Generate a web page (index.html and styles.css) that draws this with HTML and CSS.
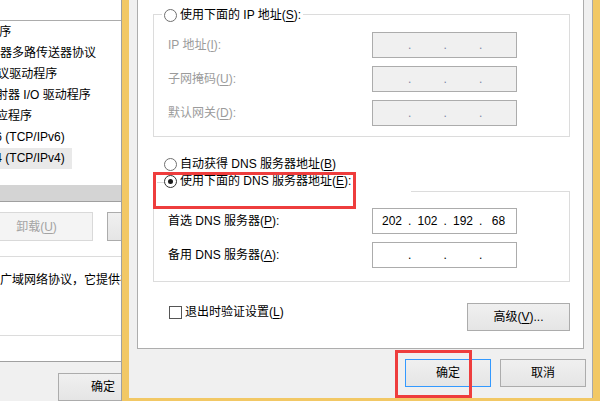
FILE: index.html
```html
<!DOCTYPE html>
<html lang="zh-CN">
<head>
<meta charset="utf-8">
<title>Internet 协议版本 4 (TCP/IPv4) 属性</title>
<link rel="stylesheet" href="styles.css">
</head>
<body>
<div class="screen">
  <div class="bgwin">
    <div class="page">
      <div class="list">
        <div class="items">
          <div class="row">QoS 数据包计划程序</div>
          <div class="row">Microsoft 网络适配器多路传送器协议</div>
          <div class="row">Microsoft LLDP 协议驱动程序</div>
          <div class="row">链路层拓扑发现映射器 I/O 驱动程序</div>
          <div class="row">链路层拓扑发现响应程序</div>
          <div class="row">Internet 协议版本 6 (TCP/IPv6)</div>
          <div class="row"><span class="sel">Internet 协议版本 4 (TCP/IPv4)</span></div>
        </div>
        <div class="hscroll"></div>
      </div>
      <div class="lbtnrow">
        <div class="btn btn-off uninstall">卸载(<u>U</u>)</div>
        <div class="btn prop">属性(<u>R</u>)</div>
      </div>
      <div class="desc">广域网络协议，它提供在不同的相互连接的网络上的通讯。</div>
    </div>
    <div class="bgfoot">
      <div class="btn okbg">确定</div>
    </div>
  </div>

  <div class="dialog">
    <div class="panel">
      <div class="group ipgroup">
        <div class="caption cap-ip"><span class="radio"></span><span>使用下面的 IP 地址(<u>S</u>):</span></div>
        <div class="rows rows-ip">
          <div class="frow">
            <span class="label off">IP 地址(<u>I</u>):</span>
            <div class="ipbox ipbox-off"><span></span><span class="dot">.</span><span></span><span class="dot">.</span><span></span><span class="dot">.</span><span></span></div>
          </div>
          <div class="frow">
            <span class="label off">子网掩码(<u>U</u>):</span>
            <div class="ipbox ipbox-off"><span></span><span class="dot">.</span><span></span><span class="dot">.</span><span></span><span class="dot">.</span><span></span></div>
          </div>
          <div class="frow">
            <span class="label off">默认网关(<u>D</u>):</span>
            <div class="ipbox ipbox-off"><span></span><span class="dot">.</span><span></span><span class="dot">.</span><span></span><span class="dot">.</span><span></span></div>
          </div>
        </div>
      </div>

      <div class="autodns"><span class="radio"></span><span>自动获得 DNS 服务器地址(<u>B</u>)</span></div>

      <div class="group dnsgroup">
        <div class="caption cap-dns"><span class="stub"></span><span class="radio radio-on"></span><span>使用下面的 DNS 服务器地址(<u>E</u>):</span></div>
        <div class="redbox redbox-dns"></div>
        <div class="rows rows-dns">
          <div class="frow">
            <span class="label">首选 DNS 服务器(<u>P</u>):</span>
            <div class="ipbox"><span>202</span><span class="dot">.</span><span>102</span><span class="dot">.</span><span>192</span><span class="dot">.</span><span>68</span></div>
          </div>
          <div class="frow">
            <span class="label">备用 DNS 服务器(<u>A</u>):</span>
            <div class="ipbox"><span></span><span class="dot">.</span><span></span><span class="dot">.</span><span></span><span class="dot">.</span><span></span></div>
          </div>
        </div>
      </div>

      <div class="bottomrow">
        <div class="check"><span class="checkbox"></span><span>退出时验证设置(<u>L</u>)</span></div>
        <div class="btn advanced">高级(<u>V</u>)...</div>
      </div>
    </div>

    <div class="dlgbtns">
      <div class="btn dlgbtn default">确定<div class="redbox redbox-ok"></div></div>
      <div class="btn dlgbtn">取消</div>
    </div>
  </div>
</div>
</body>
</html>
```

FILE: styles.css
```css
html, body {
  margin: 0;
  padding: 0;
}

body {
  width: 600px;
  height: 401px;
  overflow: hidden;
  font-family: "Liberation Sans", "Noto Sans CJK SC", sans-serif;
  font-size: 12px;
  line-height: 16px;
  color: #000;
  background: #f0f0f0;
}

u {
  text-decoration: underline;
  text-underline-offset: 2px;
}

.screen {
  display: flex;
  width: 600px;
  height: 401px;
  overflow: hidden;
}

/* ---------- background window (left) ---------- */
.bgwin {
  width: 122px;
  flex: none;
  box-sizing: border-box;
  border-right: 1px solid #a0a0a0;
  background: #f0f0f0;
  display: flex;
  flex-direction: column;
  overflow: hidden;
}

.page {
  height: 362px;
  box-sizing: border-box;
  background: #fff;
  border-bottom: 1px solid #a0a0a0;
}

.list {
  margin-top: 20px;
  border-top: 1px solid #acacac;
  border-bottom: 1px solid #a0a0a0;
  padding-top: 1px;
}

.items {
  margin-left: -100px;
  padding-bottom: 16px;
}

.row {
  height: 21px;
  line-height: 21px;
  white-space: nowrap;
}

.sel {
  display: inline-block;
  background: #e9e9e9;
  padding-right: 7px;
}

.hscroll {
  height: 16px;
  background: #d4d4d4;
}

.lbtnrow {
  display: flex;
  margin-top: 10px;
  height: 29px;
}

.btn {
  box-sizing: border-box;
  display: flex;
  align-items: center;
  justify-content: center;
  background: linear-gradient(#f0f0f0, #e5e5e5);
  border: 1px solid #acacac;
  white-space: nowrap;
}

.btn-off {
  background: #f4f4f4;
  border-color: #d9d9d9;
  color: #a3a3a3;
}

.uninstall {
  margin-left: -20px;
  width: 113px;
  flex: none;
}

.prop {
  margin-left: 14px;
  width: 90px;
  flex: none;
}

.desc {
  margin-top: 15px;
  height: 80px;
  box-sizing: border-box;
  border-top: 1px solid #dcdcdc;
  border-bottom: 1px solid #dcdcdc;
  padding-top: 15px;
  white-space: nowrap;
  overflow: hidden;
}

.bgfoot {
  padding-top: 11px;
  padding-left: 58px;
}

.okbg {
  width: 90px;
  height: 28px;
}

/* ---------- dialog ---------- */
.dialog {
  flex: 1;
  display: flex;
  flex-direction: column;
  background: #f0f0f0;
  border-style: solid;
  border-color: #f2c865;
  border-width: 0 7px 3px 7px;
  box-shadow: inset -1px 0 #a9a9a9;
  padding: 0 9px 0 8px;
}

.panel {
  height: 349px;
  box-sizing: border-box;
  background: #fff;
  border: 1px solid #adadad;
  border-top: none;
  padding: 0 13px 0 15px;
}

.group {
  border: 1px solid #dcdcdc;
  position: relative;
}

.ipgroup {
  margin-top: 14px;
  padding: 0 0 10px 14px;
}

.caption {
  display: flex;
  align-items: center;
  background: #fff;
  height: 16px;
}

.cap-ip {
  margin: -8px 0 0 -6px;
  padding: 0 2px;
  align-self: flex-start;
  width: max-content;
}

.radio {
  width: 13px;
  height: 13px;
  box-sizing: border-box;
  border: 1px solid #707070;
  border-radius: 50%;
  background: #fff;
  flex: none;
  margin-right: 3px;
  display: flex;
  align-items: center;
  justify-content: center;
}

.radio-on {
  border-color: #333;
}

.radio-on::after {
  content: "";
  width: 5px;
  height: 5px;
  border-radius: 50%;
  background: #1a1a1a;
}

.rows {
  display: flex;
  flex-direction: column;
  gap: 8px;
}

.rows-ip {
  margin-top: 9px;
}

.frow {
  display: flex;
  align-items: center;
  height: 26px;
}

.label {
  width: 204px;
  flex: none;
  white-space: nowrap;
}

.off {
  color: #9b9b9b;
}

.ipbox {
  width: 145px;
  height: 26px;
  box-sizing: border-box;
  border: 1px solid #acacac;
  background: #fff;
  display: grid;
  grid-template-columns: 28px 7.5px 28px 7.5px 28px 7.5px 28px;
  align-items: center;
  padding-left: 5px;
  text-align: center;
}

.ipbox-off {
  background: #f0f0f0;
}

.ipbox-off .dot {
  color: #7d86a6;
}

.autodns {
  display: flex;
  align-items: center;
  height: 16px;
  margin: 19px 0 0 11px;
}

.dnsgroup {
  margin-top: 19px;
  padding: 0 0 13px 14px;
}

.cap-dns {
  margin: -19px 0 0 -15px;
  height: 19px;
  width: 258px;
  padding-left: 4px;
  box-sizing: border-box;
  align-items: flex-start;
}

.cap-dns .stub {
  width: 7px;
  height: 1px;
  background: #dcdcdc;
  margin-top: 9px;
  flex: none;
}

.cap-dns .radio {
  margin-top: 2px;
  margin-right: 3px;
}

.redbox {
  position: absolute;
  box-sizing: border-box;
  border: 3px solid #ee3d3d;
  pointer-events: none;
}

.redbox-dns {
  left: -1px;
  top: -20px;
  width: 203px;
  height: 37px;
}

.rows-dns {
  margin-top: 16px;
}

.bottomrow {
  display: flex;
  align-items: flex-start;
  margin-top: 21px;
}

.check {
  display: flex;
  align-items: center;
  height: 16px;
  margin: 1px 0 0 16px;
}

.checkbox {
  width: 13px;
  height: 13px;
  box-sizing: border-box;
  border: 1px solid #555;
  background: #fff;
  margin-right: 3px;
  flex: none;
}

.advanced {
  margin-left: auto;
  width: 103px;
  height: 28px;
}

.dlgbtns {
  display: flex;
  justify-content: flex-end;
  gap: 9px;
  margin: 10px -2px 0 0;
}

.dlgbtn {
  width: 86px;
  height: 28px;
  position: relative;
}

.default {
  border-color: #3399ff;
}

.redbox-ok {
  left: -11px;
  top: -10px;
  width: 77px;
  height: 48px;
}
```
